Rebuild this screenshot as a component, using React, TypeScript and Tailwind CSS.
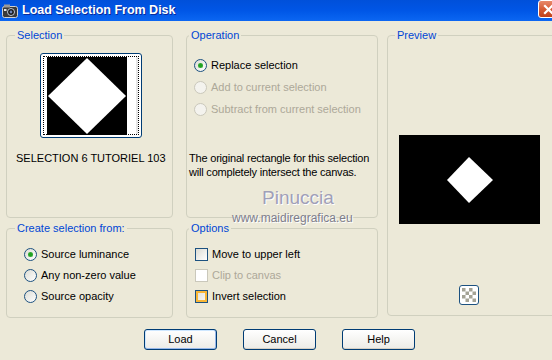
import React from "react";

const font = { fontFamily: '"Liberation Sans", Arial, sans-serif' };

function Radio({ checked, disabled }: { checked?: boolean; disabled?: boolean }) {
  return (
    <span
      className={`relative flex h-[13px] w-[13px] shrink-0 items-center justify-center rounded-full border ${
        disabled
          ? "border-[#CAC8BB] bg-[#F4F3EE]"
          : "border-[#1C5180] bg-linear-to-br from-[#DCDCD4] to-white"
      }`}
    >
      {checked && (
        <span className="h-[5px] w-[5px] rounded-full bg-[#21A121] shadow-[inset_0_0_1px_#7BD17B]" />
      )}
    </span>
  );
}

function Check({ disabled, hot }: { disabled?: boolean; hot?: boolean }) {
  return (
    <span
      className={`flex h-[13px] w-[13px] shrink-0 border ${
        disabled
          ? "border-[#CAC8BB] bg-white"
          : "border-[#1C5180] bg-linear-to-br from-[#DCDCD4] to-white"
      }`}
    >
      {hot && <span className="m-0 h-full w-full border-2 border-[#F8B636] bg-linear-to-br from-[#E4E4DC] to-[#F6F6F2]" />}
    </span>
  );
}

function Group({
  label,
  labelMl,
  className,
  children,
}: {
  label: string;
  labelMl: string;
  className: string;
  children: React.ReactNode;
}) {
  return (
    <fieldset className={`rounded-[4px] border border-[#D0D0BF] ${className}`}>
      <legend className={`px-[2px] text-[11px] leading-[14px] text-[#0046D5] ${labelMl}`}>{label}</legend>
      {children}
    </fieldset>
  );
}

function Row({
  children,
  disabled,
  h,
}: {
  children: React.ReactNode;
  disabled?: boolean;
  h: string;
}) {
  return (
    <div className={`flex items-center gap-[4px] text-[11px] ${h} ${disabled ? "text-[#ACA899]" : "text-black"}`}>
      {children}
    </div>
  );
}

function Button({ label, primary }: { label: string; primary?: boolean }) {
  return (
    <button
      className={`h-[21px] w-[73px] rounded-[3px] border border-[#003C74] bg-linear-to-b from-white to-[#ECEBE6] text-[11px] text-black ${
        primary ? "shadow-[inset_0_-1px_0_#98B8EA,inset_1px_0_0_#CEE7FF,inset_-1px_0_0_#98B8EA,inset_0_1px_0_#CEE7FF]" : "shadow-[inset_0_-1px_0_#D6D0C5]"
      }`}
    >
      {label}
    </button>
  );
}

export default function App() {
  return (
    <div className="relative h-[360px] w-[552px] overflow-hidden bg-[#ECE9D8]" style={font}>
      {/* Title bar */}
      <div className="flex h-[21px] items-center bg-linear-to-b from-[#0050DA] via-[#0056E6] to-[#0C66F2]">
        <svg className="ml-[2px]" width="16" height="14" viewBox="0 0 16 14">
          <rect x="0.5" y="2.5" width="15" height="11" rx="2" fill="#3A3A3A" stroke="#D0D0D0" />
          <rect x="2" y="0.5" width="6" height="3" fill="#9A9A9A" />
          <circle cx="9" cy="8" r="3.5" fill="#151515" stroke="#BFC7D6" />
          <circle cx="9" cy="8" r="1.4" fill="#6F86B5" />
          <rect x="2" y="5" width="2.5" height="2" fill="#E8E8E8" />
        </svg>
        <span className="ml-[4px] text-[12.5px] font-bold text-white [text-shadow:1px_1px_0_#0A2A9A]">
          Load Selection From Disk
        </span>
        <div className="ml-auto h-[18px] w-[14px] self-start overflow-hidden">
          <div className="flex h-[18px] w-[21px] items-center justify-center rounded-[3px] border border-white bg-linear-to-b from-[#E8896A] via-[#D55D36] to-[#C0401A]">
            <svg width="11" height="11" viewBox="0 0 11 11">
              <path d="M2 2 L9 9 M9 2 L2 9" stroke="white" strokeWidth="2.2" strokeLinecap="square" />
            </svg>
          </div>
        </div>
      </div>

      {/* Body */}
      <div className="flex pl-[6px] pt-[7px]">
        {/* Left column */}
        <div className="flex w-[167px] shrink-0 flex-col gap-[3px]">
          <Group label="Selection" labelMl="ml-[8px]" className="h-[190px]">
            <div className="ml-[33px] mt-[11px] h-[85px] w-[102px] rounded-[3px] border border-[#003C74] bg-white p-[2px]">
              <div className="flex h-full border border-dotted border-black">
                <svg className="ml-[3px] shrink-0" width="80" height="78" viewBox="0 0 80 78">
                  <rect width="80" height="78" fill="black" />
                  <polygon points="40,1 1,39 40,77 79,39" fill="white" />
                </svg>
                <div className="h-full flex-1 border-r-2 border-[#E4E4E4] bg-white" />
              </div>
            </div>
            <div className="ml-[9px] mt-[14px] text-[11px] leading-[13px] text-black">SELECTION 6 TUTORIEL 103</div>
          </Group>

          <Group label="Create selection from:" labelMl="ml-[8px]" className="h-[97px]">
            <div className="ml-[17px] mt-[9px] flex flex-col">
              <Row h="h-[21px]">
                <Radio checked />
                <span>Source luminance</span>
              </Row>
              <Row h="h-[21px]">
                <Radio />
                <span>Any non-zero value</span>
              </Row>
              <Row h="h-[21px]">
                <Radio />
                <span>Source opacity</span>
              </Row>
            </div>
          </Group>
        </div>

        {/* Middle column */}
        <div className="ml-[13px] flex w-[192px] shrink-0 flex-col gap-[3px]">
          <Group label="Operation" labelMl="ml-[2px]" className="h-[190px]">
            <div className="ml-[7px] mt-[12px] flex flex-col">
              <Row h="h-[22px]">
                <Radio checked />
                <span>Replace selection</span>
              </Row>
              <Row h="h-[22px]" disabled>
                <Radio disabled />
                <span>Add to current selection</span>
              </Row>
              <Row h="h-[22px]" disabled>
                <Radio disabled />
                <span>Subtract from current selection</span>
              </Row>
            </div>
            <p className="ml-[2px] mt-[31px] whitespace-nowrap text-[11px] leading-[14px] tracking-[-0.2px] text-black">
              The original rectangle for this selection
              <br />
              will completely intersect the canvas.
            </p>
          </Group>

          <Group label="Options" labelMl="ml-[2px]" className="h-[97px]">
            <div className="ml-[8px] mt-[9px] flex flex-col">
              <Row h="h-[21px]">
                <Check />
                <span>Move to upper left</span>
              </Row>
              <Row h="h-[21px]" disabled>
                <Check disabled />
                <span>Clip to canvas</span>
              </Row>
              <Row h="h-[21px]">
                <Check hot />
                <span>Invert selection</span>
              </Row>
            </div>
          </Group>
        </div>

        {/* Right column */}
        <div className="ml-[9px] w-[175px] shrink-0">
          <Group label="Preview" labelMl="ml-[7px]" className="h-[288px]">
            <svg className="ml-[11px] mt-[93px] block" width="141" height="89" viewBox="0 0 141 89">
              <rect width="141" height="89" fill="black" />
              <polygon points="70,22 48,45 70,68 94,45" fill="white" />
            </svg>
            <div className="ml-[71px] mt-[61px] flex h-[20px] w-[20px] items-center justify-center rounded-[3px] border border-[#1C5180] bg-white">
              <svg width="14" height="14" viewBox="0 0 14 14">
                <rect x="0" y="0" width="3.5" height="3.5" fill="#A4A395" />
                <rect x="7" y="0" width="3.5" height="3.5" fill="#A4A395" />
                <rect x="3.5" y="3.5" width="3.5" height="3.5" fill="#A4A395" />
                <rect x="10.5" y="3.5" width="3.5" height="3.5" fill="#A4A395" />
                <rect x="0" y="7" width="3.5" height="3.5" fill="#A4A395" />
                <rect x="7" y="7" width="3.5" height="3.5" fill="#A4A395" />
                <rect x="3.5" y="10.5" width="3.5" height="3.5" fill="#A4A395" />
                <rect x="10.5" y="10.5" width="3.5" height="3.5" fill="#A4A395" />
              </svg>
            </div>
          </Group>
        </div>
      </div>

      {/* Buttons */}
      <div className="ml-[144px] mt-[11px] flex gap-[26px]">
        <Button label="Load" primary />
        <Button label="Cancel" />
        <Button label="Help" />
      </div>

      {/* Watermark */}
      <div className="pointer-events-none absolute left-[262px] top-[187px] text-[19px] leading-[22px] text-[#A09FB8] [text-shadow:1px_1px_0_#FFFFFF]">
        Pinuccia
      </div>
      <div className="pointer-events-none absolute left-[232px] top-[209px] text-[12px] text-[#7E7E8C] [text-shadow:1px_1px_0_#FFFFFF]">
        www.maidiregrafica.eu
      </div>
    </div>
  );
}
